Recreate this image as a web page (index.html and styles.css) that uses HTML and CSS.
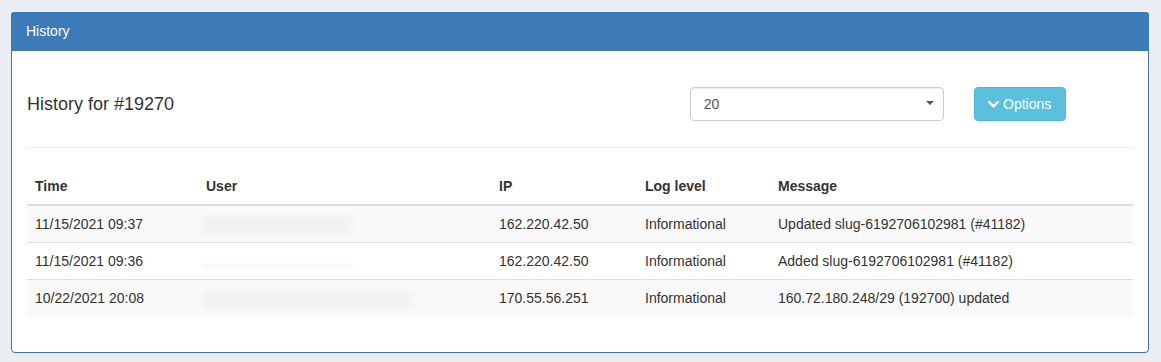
FILE: index.html
```html
<!DOCTYPE html>
<html lang="en">
<head>
  <meta charset="UTF-8">
  <title>History</title>
  <link rel="stylesheet" href="styles.css">
</head>
<body>

  <div class="panel">
    <div class="panel-heading">History</div>

    <div class="panel-body">
      <div class="row">
        <div class="col col-7">
          <h4>History for #19270</h4>
        </div>
        <div class="col col-3">
          <div class="select-box">
            <span>20</span>
            <span class="caret"></span>
          </div>
        </div>
        <div class="col col-2">
          <button class="btn-info">
            <svg class="chevron" viewBox="0 0 12 10" width="11" height="9">
              <path d="M1.2 2.2 L6 7 L10.8 2.2" fill="none" stroke="#fff" stroke-width="2.6" stroke-linecap="round" stroke-linejoin="round"/>
            </svg>
            Options
          </button>
        </div>
      </div>

      <hr>

      <!-- History table -->
      <table class="history-table">
        <thead>
          <tr>
            <th class="c-time">Time</th>
            <th class="c-user">User</th>
            <th class="c-ip">IP</th>
            <th class="c-level">Log level</th>
            <th>Message</th>
          </tr>
        </thead>
        <tbody>
          <tr>
            <td>11/15/2021 09:37</td>
            <td><span class="hidden-user" style="width: 150px"></span></td>
            <td>162.220.42.50</td>
            <td>Informational</td>
            <td>Updated slug-6192706102981 (#41182)</td>
          </tr>
          <tr>
            <td>11/15/2021 09:36</td>
            <td><span class="hidden-user faint" style="width: 150px"></span></td>
            <td>162.220.42.50</td>
            <td>Informational</td>
            <td>Added slug-6192706102981 (#41182)</td>
          </tr>
          <tr>
            <td>10/22/2021 20:08</td>
            <td><span class="hidden-user" style="width: 210px"></span></td>
            <td>170.55.56.251</td>
            <td>Informational</td>
            <td>160.72.180.248/29 (192700) updated</td>
          </tr>
        </tbody>
      </table>
    </div>
  </div>

</body>
</html>
```

FILE: styles.css
```css
/* General Reset */
* {
  margin: 0;
  padding: 0;
  box-sizing: border-box;
}

body {
  font-family: 'Liberation Sans', Arial, sans-serif;
  font-size: 14px;
  line-height: 20px;
  color: #333;
  background-color: #eaeef2;
  padding: 12px 12px 10px 11px;
}

/* Panel */
.panel {
  background-color: #fff;
  border: 1px solid #4d7497;
  border-radius: 4px;
  box-shadow: 0 1px 1px rgba(0, 0, 0, 0.05);
}

.panel-heading {
  background-color: #3d7ab8;
  color: #fff;
  padding: 9px 15px 10px 15px;
  font-size: 14px;
  border-top-left-radius: 3px;
  border-top-right-radius: 3px;
  margin: -1px -1px 0 -1px;
}

.panel-body {
  padding: 15px;
}

/* Top row */
.row {
  display: flex;
  align-items: center;
  margin: 0 -15px;
  padding: 21px 0 6px 0;
}

.col {
  padding: 0 15px;
}

.col-7 { width: 58.3333%; }
.col-3 { width: 25%; }
.col-2 { width: 16.6667%; }

h4 {
  font-size: 18px;
  font-weight: 400;
  line-height: 20px;
  color: #333;
}

.select-box {
  display: flex;
  align-items: center;
  justify-content: space-between;
  height: 34px;
  padding: 0 9px 0 13px;
  border: 1px solid #ccc;
  border-radius: 4px;
  background-color: #fff;
  box-shadow: inset 0 1px 1px rgba(0, 0, 0, 0.075);
  color: #555;
}

.caret {
  width: 0;
  height: 0;
  border-left: 4px solid transparent;
  border-right: 4px solid transparent;
  border-top: 4px solid #555;
  margin-top: -3px;
}

.btn-info {
  display: inline-flex;
  align-items: center;
  gap: 4px;
  height: 34px;
  width: 92px;
  justify-content: center;
  font-family: inherit;
  font-size: 14px;
  color: #fff;
  background-color: #5bc0de;
  border: 1px solid #46b8da;
  border-radius: 4px;
  cursor: pointer;
}

.chevron {
  margin-top: 1px;
}

hr {
  border: 0;
  border-top: 1px solid #eee;
  margin: 20px 0;
}

/* Table */
.history-table {
  width: 100%;
  border-collapse: collapse;
  margin-bottom: 20px;
}

.history-table th,
.history-table td {
  text-align: left;
  padding: 8px;
  line-height: 20px;
  vertical-align: top;
}

.history-table th {
  font-weight: 700;
  border-bottom: 2px solid #ddd;
}

.history-table td {
  border-top: 1px solid #ddd;
}

.history-table thead tr:first-child th {
  border-top: 0;
}

.history-table tbody tr:nth-child(odd) {
  background-color: #f9f9f9;
}

.c-time { width: 171px; }
.c-user { width: 293px; }
.c-ip { width: 146px; }
.c-level { width: 133px; }

.hidden-user {
  display: inline-block;
  height: 18px;
  vertical-align: middle;
  background-color: #f2f2f2;
  filter: blur(2px);
  margin-left: -4px;
}

.hidden-user.faint {
  height: 3px;
  margin-top: 8px;
  background-color: #f4f4f4;
}
```
